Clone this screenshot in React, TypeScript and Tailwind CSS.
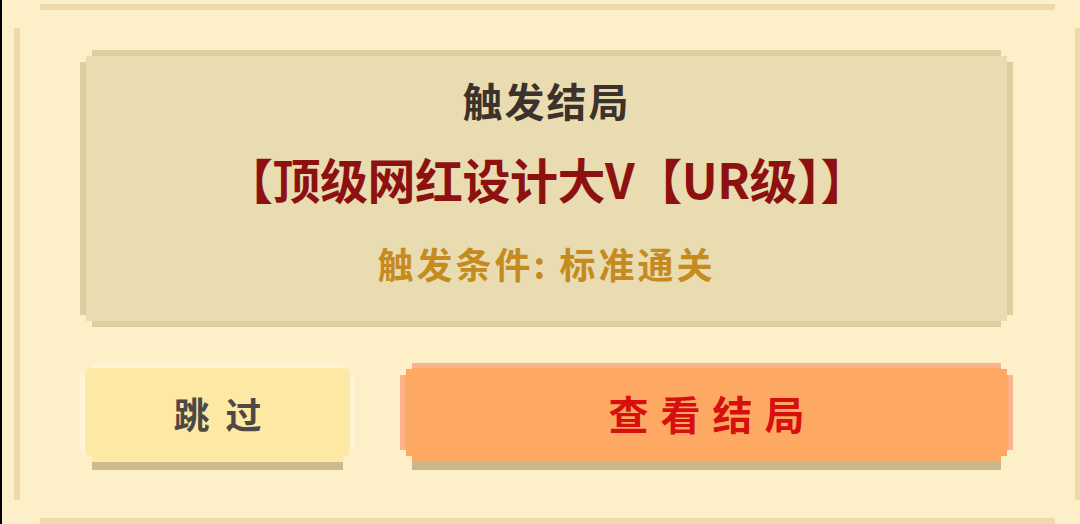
const cjk = "font-['Noto_Sans_CJK_SC','Noto_Sans',sans-serif]";

// stepped pixel corners, two 6px steps
const notch12 =
  '[clip-path:polygon(12px_0,calc(100%_-_12px)_0,calc(100%_-_12px)_6px,calc(100%_-_6px)_6px,calc(100%_-_6px)_12px,100%_12px,100%_calc(100%_-_12px),calc(100%_-_6px)_calc(100%_-_12px),calc(100%_-_6px)_calc(100%_-_6px),calc(100%_-_12px)_calc(100%_-_6px),calc(100%_-_12px)_100%,12px_100%,12px_calc(100%_-_6px),6px_calc(100%_-_6px),6px_calc(100%_-_12px),0_calc(100%_-_12px),0_12px,6px_12px,6px_6px,12px_6px)]';

// outer frame: a bigger stair so the lines stop short of the corners
const notch20 =
  '[clip-path:polygon(26px_0,calc(100%_-_26px)_0,calc(100%_-_26px)_6px,calc(100%_-_20px)_6px,calc(100%_-_20px)_12px,calc(100%_-_6px)_12px,calc(100%_-_6px)_24px,100%_24px,100%_calc(100%_-_24px),calc(100%_-_6px)_calc(100%_-_24px),calc(100%_-_6px)_calc(100%_-_12px),calc(100%_-_20px)_calc(100%_-_12px),calc(100%_-_20px)_calc(100%_-_6px),calc(100%_-_26px)_calc(100%_-_6px),calc(100%_-_26px)_100%,26px_100%,26px_calc(100%_-_6px),20px_calc(100%_-_6px),20px_calc(100%_-_12px),6px_calc(100%_-_12px),6px_calc(100%_-_24px),0_calc(100%_-_24px),0_24px,6px_24px,6px_12px,20px_12px,20px_6px,26px_6px)]';

function PixelButton({
  width,
  fill,
  edge,
  drop,
  children,
}: {
  width: string;
  fill: string;
  edge: string;
  drop: string;
  children: React.ReactNode;
}) {
  return (
    <button className={`flex flex-col ${width}`}>
      <div className={`h-[99px] w-full flex items-center justify-center ${fill} ${edge} ${notch12}`}>
        {children}
      </div>
      <div className={`h-[8px] mx-[12px] ${drop}`} />
    </button>
  );
}

export default function App() {
  return (
    <div className={`w-[1080px] h-[524px] overflow-hidden bg-[#fdf0c8] border-l-2 border-black ${cjk}`}>
      <div
        className={`ml-[12px] mt-[4px] w-[1067px] h-[520px] bg-[#fdf0c8] shadow-[inset_6px_6px_0_#eedaa8,inset_-6px_-6px_0_#eedaa8] ${notch20}`}
      >
        <div className="pl-[66px] pt-[46px]">
          {/* result panel */}
          <div
            className={`w-[933px] h-[277px] flex flex-col items-center bg-[#e9dcb0] shadow-[inset_6px_6px_0_#ddcd9f,inset_-6px_-6px_0_#ddcd9f] ${notch12}`}
          >
            <div className="mt-[30px] h-[40px] leading-[40px] text-[40px] font-bold text-[#3c312b] tracking-[2px]">
              触发结局
            </div>
            <div className="mt-[30px] h-[56px] leading-[56px] text-[48px] font-bold text-[#8e1111] tracking-[-0.5px]">
              【顶级网红设计大V【UR级】】
            </div>
            <div className="mt-[37px] h-[40px] leading-[40px] text-[36px] font-bold text-[#c58b20] tracking-[3px]">
              触发条件: 标准通关
            </div>
          </div>

          <div className="mt-[36px] flex gap-[45px]">
            <PixelButton
              width="w-[275px]"
              fill="bg-[#fde8a4]"
              edge="shadow-[inset_5px_5px_0_#fff4d4,inset_-5px_0_0_#fff4d4]"
              drop="bg-[#cdbb8c]"
            >
              <span className="text-[36px] font-bold text-[#4e4946] tracking-[16px] pl-[16px]">跳过</span>
            </PixelButton>
            <PixelButton
              width="w-[613px]"
              fill="bg-[#fda964]"
              edge="shadow-[inset_5px_5px_0_#fdb48c,inset_-5px_0_0_#fdb48c]"
              drop="bg-[#c9b68a]"
            >
              <span className="text-[40px] font-bold text-[#d70f0f] tracking-[12px] pl-[12px]">查看结局</span>
            </PixelButton>
          </div>
        </div>
      </div>
    </div>
  );
}
